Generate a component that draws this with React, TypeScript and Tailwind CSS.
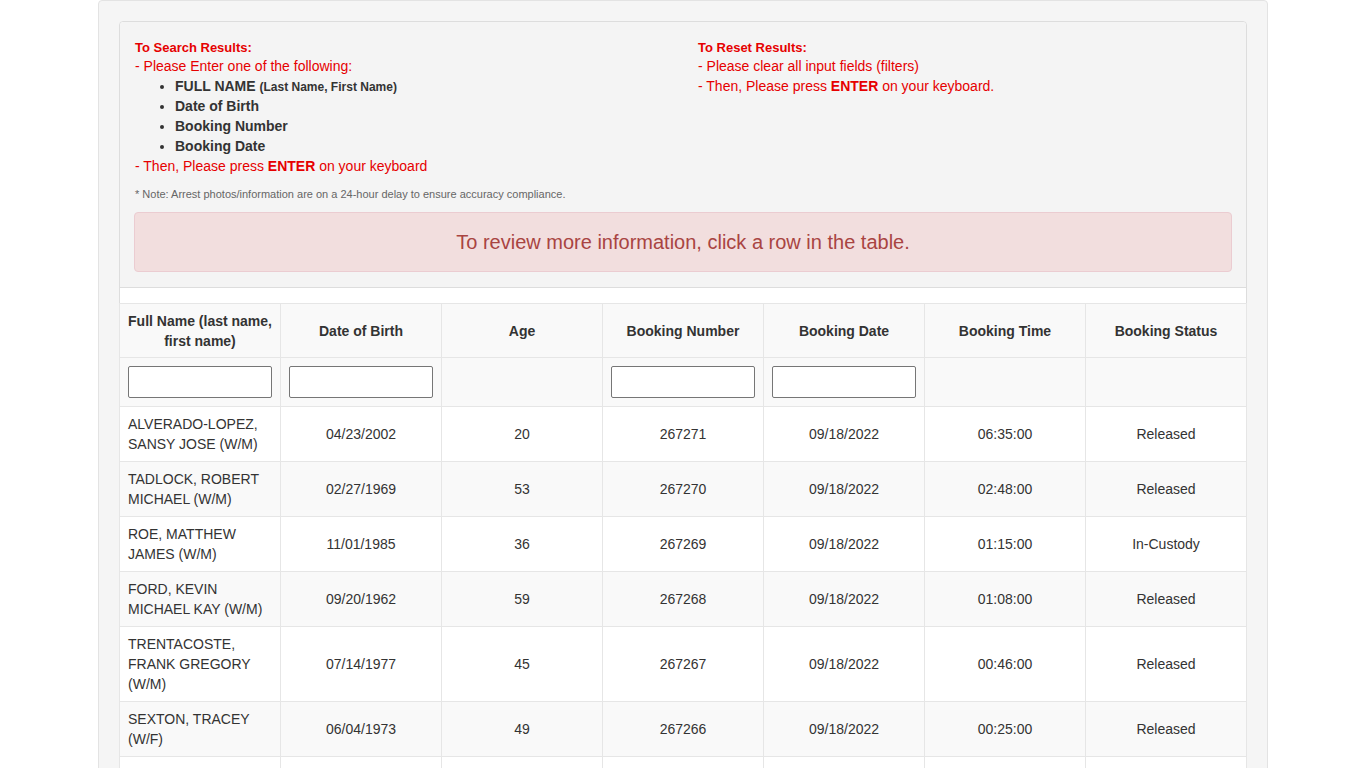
import React from "react";

interface Booking {
  name: string;
  dob: string;
  age: number;
  number: string;
  date: string;
  time: string;
  status: string;
}

const bookings: Booking[] = [
  { name: "ALVERADO-LOPEZ, SANSY JOSE (W/M)", dob: "04/23/2002", age: 20, number: "267271", date: "09/18/2022", time: "06:35:00", status: "Released" },
  { name: "TADLOCK, ROBERT MICHAEL (W/M)", dob: "02/27/1969", age: 53, number: "267270", date: "09/18/2022", time: "02:48:00", status: "Released" },
  { name: "ROE, MATTHEW JAMES (W/M)", dob: "11/01/1985", age: 36, number: "267269", date: "09/18/2022", time: "01:15:00", status: "In-Custody" },
  { name: "FORD, KEVIN MICHAEL KAY (W/M)", dob: "09/20/1962", age: 59, number: "267268", date: "09/18/2022", time: "01:08:00", status: "Released" },
  { name: "TRENTACOSTE, FRANK GREGORY (W/M)", dob: "07/14/1977", age: 45, number: "267267", date: "09/18/2022", time: "00:46:00", status: "Released" },
  { name: "SEXTON, TRACEY (W/F)", dob: "06/04/1973", age: 49, number: "267266", date: "09/18/2022", time: "00:25:00", status: "Released" },
];

const headers = [
  "Full Name (last name, first name)",
  "Date of Birth",
  "Age",
  "Booking Number",
  "Booking Date",
  "Booking Time",
  "Booking Status",
];

const hasFilter = [true, true, false, true, true, false, false];

export default function App() {
  return (
    <div
      className="min-h-screen bg-white text-[14px] leading-5 text-[#333]"
      style={{ fontFamily: '"Liberation Sans", Arial, sans-serif' }}
    >
      <div className="mx-auto w-[1170px] rounded border border-[#e3e3e3] bg-[#f5f5f5] px-5 pt-5 pb-5">
        <div className="rounded border border-[#ddd] bg-white">
          {/* instructions */}
          <div className="rounded-t border-b border-[#ddd] bg-[#f4f4f4] px-[15px] pt-[17px] pb-[15px]">
            <div className="-mx-[15px] grid grid-cols-2">
              <div className="px-[15px] text-[#e60000]">
                <div className="text-[13px] font-bold leading-[17px]">To Search Results:</div>
                <div>- Please Enter one of the following:</div>
                <ul className="list-disc pl-10 font-bold text-[#333]">
                  <li>
                    FULL NAME <span className="text-[12px] leading-none">(Last Name, First Name)</span>
                  </li>
                  <li>Date of Birth</li>
                  <li>Booking Number</li>
                  <li>Booking Date</li>
                </ul>
                <div>
                  - Then, Please press <b>ENTER</b> on your keyboard
                </div>
              </div>
              <div className="px-[15px] text-[#e60000]">
                <div className="text-[13px] font-bold leading-[17px]">To Reset Results:</div>
                <div>- Please clear all input fields (filters)</div>
                <div>
                  - Then, Please press <b>ENTER</b> on your keyboard.
                </div>
              </div>
            </div>
            <p className="mt-[10px] text-[11px] leading-4 text-[#666]">
              * Note: Arrest photos/information are on a 24-hour delay to ensure accuracy compliance.
            </p>
            <div className="-mx-px mt-[10px] rounded border border-[#ebccd1] bg-[#f2dede] py-[16px] text-center text-[20px] leading-[26px] text-[#a94442]">
              To review more information, click a row in the table.
            </div>
          </div>

          {/* table */}
          <div className="-mx-px pt-[15px]">
            <table className="w-full table-fixed border-collapse">
              <thead>
                <tr className="bg-[#f9f9f9]">
                  {headers.map((h, i) => (
                    <th
                      key={h}
                      className={`border border-[#e6e6e6] pt-[7px] pb-[6px] text-center align-middle font-bold text-[#333] ${i === 0 ? "px-1" : "px-2"}`}
                    >
                      {h}
                    </th>
                  ))}
                </tr>
              </thead>
              <tbody>
                <tr className="bg-[#f9f9f9]">
                  {hasFilter.map((f, i) => (
                    <td key={i} className="h-[48px] border border-[#e6e6e6] px-2 py-2 align-middle">
                      {f && (
                        <input
                          type="text"
                          className="block h-8 w-full rounded-[2px] border border-[#767676] bg-white"
                        />
                      )}
                    </td>
                  ))}
                </tr>
                {bookings.map((b, i) => (
                  <tr key={b.number} className={i % 2 === 0 ? "bg-white" : "bg-[#f9f9f9]"}>
                    <td className="border border-[#e6e6e6] px-2 py-[7px] align-middle">{b.name}</td>
                    <td className="border border-[#e6e6e6] px-2 py-[7px] text-center align-middle">{b.dob}</td>
                    <td className="border border-[#e6e6e6] px-2 py-[7px] text-center align-middle">{b.age}</td>
                    <td className="border border-[#e6e6e6] px-2 py-[7px] text-center align-middle">{b.number}</td>
                    <td className="border border-[#e6e6e6] px-2 py-[7px] text-center align-middle">{b.date}</td>
                    <td className="border border-[#e6e6e6] px-2 py-[7px] text-center align-middle">{b.time}</td>
                    <td className="border border-[#e6e6e6] px-2 py-[7px] text-center align-middle">{b.status}</td>
                  </tr>
                ))}
                <tr className="bg-white">
                  <td className="h-[55px] border border-[#e6e6e6]" />
                  <td className="border border-[#e6e6e6]" />
                  <td className="border border-[#e6e6e6]" />
                  <td className="border border-[#e6e6e6]" />
                  <td className="border border-[#e6e6e6]" />
                  <td className="border border-[#e6e6e6]" />
                  <td className="border border-[#e6e6e6]" />
                </tr>
              </tbody>
            </table>
          </div>
        </div>
      </div>
    </div>
  );
}
